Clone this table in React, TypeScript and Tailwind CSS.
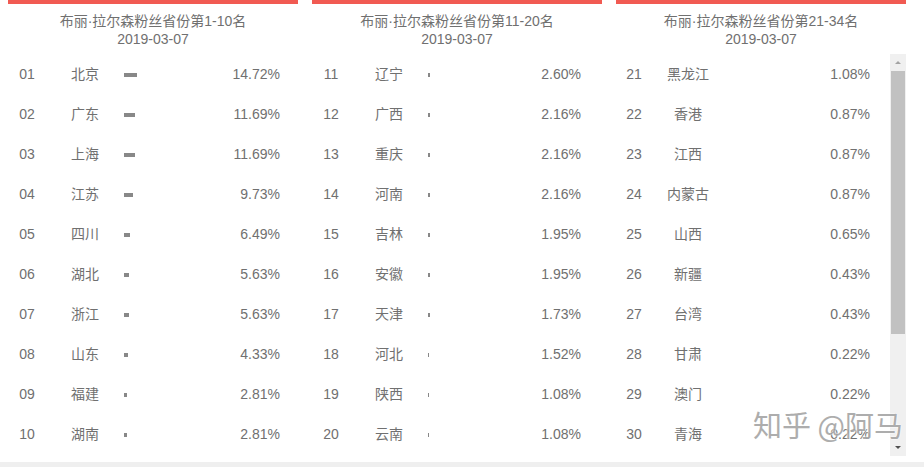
import React from "react";

type Row = { rank: string; name: string; pct: number };

const PANELS: { title: string; rows: Row[]; bars: boolean; scroll?: boolean }[] = [
  {
    title: "布丽·拉尔森粉丝省份第1-10名",
    bars: true,
    rows: [
      { rank: "01", name: "北京", pct: 14.72 },
      { rank: "02", name: "广东", pct: 11.69 },
      { rank: "03", name: "上海", pct: 11.69 },
      { rank: "04", name: "江苏", pct: 9.73 },
      { rank: "05", name: "四川", pct: 6.49 },
      { rank: "06", name: "湖北", pct: 5.63 },
      { rank: "07", name: "浙江", pct: 5.63 },
      { rank: "08", name: "山东", pct: 4.33 },
      { rank: "09", name: "福建", pct: 2.81 },
      { rank: "10", name: "湖南", pct: 2.81 },
    ],
  },
  {
    title: "布丽·拉尔森粉丝省份第11-20名",
    bars: true,
    rows: [
      { rank: "11", name: "辽宁", pct: 2.6 },
      { rank: "12", name: "广西", pct: 2.16 },
      { rank: "13", name: "重庆", pct: 2.16 },
      { rank: "14", name: "河南", pct: 2.16 },
      { rank: "15", name: "吉林", pct: 1.95 },
      { rank: "16", name: "安徽", pct: 1.95 },
      { rank: "17", name: "天津", pct: 1.73 },
      { rank: "18", name: "河北", pct: 1.52 },
      { rank: "19", name: "陕西", pct: 1.08 },
      { rank: "20", name: "云南", pct: 1.08 },
    ],
  },
  {
    title: "布丽·拉尔森粉丝省份第21-34名",
    bars: false,
    scroll: true,
    rows: [
      { rank: "21", name: "黑龙江", pct: 1.08 },
      { rank: "22", name: "香港", pct: 0.87 },
      { rank: "23", name: "江西", pct: 0.87 },
      { rank: "24", name: "内蒙古", pct: 0.87 },
      { rank: "25", name: "山西", pct: 0.65 },
      { rank: "26", name: "新疆", pct: 0.43 },
      { rank: "27", name: "台湾", pct: 0.43 },
      { rank: "28", name: "甘肃", pct: 0.22 },
      { rank: "29", name: "澳门", pct: 0.22 },
      { rank: "30", name: "青海", pct: 0.22 },
      { rank: "31", name: "贵州", pct: 0.22 },
      { rank: "32", name: "宁夏", pct: 0.22 },
      { rank: "33", name: "海南", pct: 0.22 },
      { rank: "34", name: "西藏", pct: 0.22 },
    ],
  },
];

function BarRow({ row, bars, panel }: { row: Row; bars: boolean; panel: number }) {
  return (
    <div className="flex items-center h-[40px] shrink-0">
      <span className={`${panel === 2 ? "w-[36px]" : "w-[38px]"} text-center`}>{row.rank}</span>
      <span className={`${panel === 2 ? "w-[72px]" : "w-[78px]"} text-center`}>{row.name}</span>
      <span className="flex-1 flex items-center">
        {bars && (
          <span
            className="block h-[4px] bg-[#888] mt-[2px]"
            style={{ width: `${row.pct * 0.9}px` }}
          />
        )}
      </span>
      <span
        className={`text-right ${panel === 0 ? "pr-[18px]" : panel === 1 ? "pr-[21px]" : "pr-[20px]"}`}
      >
        {row.pct.toFixed(2)}%
      </span>
    </div>
  );
}

function Scrollbar() {
  return (
    <div className="w-[16px] bg-[#f0f0f0] flex flex-col items-center">
      <div className="h-[17px] w-full flex items-center justify-center">
        <span className="w-0 h-0 border-l-[3px] border-r-[3px] border-b-[3px] border-l-transparent border-r-transparent border-b-[#a3a3a3]" />
      </div>
      <div className="flex-1 w-full">
        <div className="h-[263px] w-[14px] mx-auto bg-[#c1c1c1]" />
      </div>
      <div className="h-[17px] w-full flex items-center justify-center">
        <span className="w-0 h-0 border-l-[3px] border-r-[3px] border-t-[3px] border-l-transparent border-r-transparent border-t-[#505050]" />
      </div>
    </div>
  );
}

export default function App() {
  return (
    <div
      className="relative w-[924px] h-[467px] bg-white overflow-hidden text-[14px] text-[#707070]"
      style={{ fontFamily: '"Liberation Sans", "Noto Sans CJK SC", sans-serif' }}
    >
      <div className="flex gap-[14px] pl-[8px]">
        {PANELS.map((p, i) => (
          <div key={i} className="w-[290px] flex flex-col">
            <div className="h-[4px] bg-[#f15a52]" />
            <div className="pt-[8px] text-center leading-[18px]">
              <div>{p.title}</div>
              <div>2019-03-07</div>
            </div>
            {p.scroll ? (
              <div className="mt-[6px] h-[402px] flex">
                <div className="flex-1 overflow-hidden flex flex-col">
                  {p.rows.map((r) => (
                    <BarRow key={r.rank} row={r} bars={p.bars} panel={i} />
                  ))}
                </div>
                <Scrollbar />
              </div>
            ) : (
              <div className="mt-[6px] flex flex-col">
                {p.rows.map((r) => (
                  <BarRow key={r.rank} row={r} bars={p.bars} panel={i} />
                ))}
              </div>
            )}
          </div>
        ))}
      </div>
      <div className="absolute left-0 right-0 bottom-0 h-[5px] bg-[#efefef]" />
      {/* watermark */}
      <div
        className="absolute left-[753px] top-[404px] text-[29px] leading-[40px] text-[#a5a5a5] opacity-90 whitespace-nowrap"
        style={{
          fontFamily: '"Noto Sans CJK SC", sans-serif',
          textShadow: "0 0 2px #fff, 0 0 2px #fff",
        }}
      >
        知乎 @阿马
      </div>
    </div>
  );
}
